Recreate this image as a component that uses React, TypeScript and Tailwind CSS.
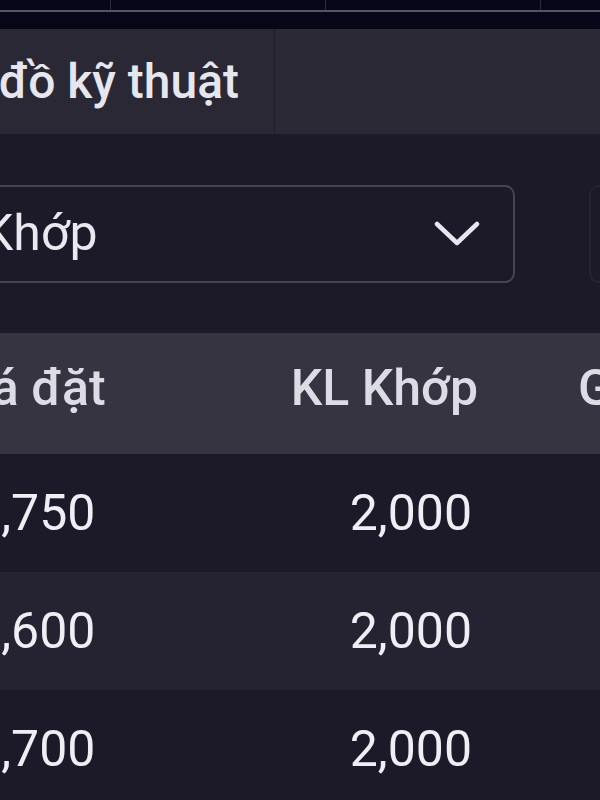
import React from "react";

const rows = [
  { price: "25,750", qty: "2,000", alt: false },
  { price: "25,600", qty: "2,000", alt: true },
  { price: "25,700", qty: "2,000", alt: false },
];

export default function App() {
  return (
    <div className="w-[600px] h-[800px] overflow-hidden bg-[#1c1a28] font-['Roboto',sans-serif] text-[#eeeef4]">
      {/* chart axis strip */}
      <div className="h-[29px] bg-[#08071a] flex flex-col">
        <div className="h-[10px] flex">
          <div className="ml-[110px] w-[1px] h-full bg-[#2e2d3c]" />
          <div className="ml-[214px] w-[1px] h-full bg-[#2e2d3c]" />
          <div className="ml-[214px] w-[1px] h-full bg-[#2e2d3c]" />
        </div>
        <div className="h-[2px] bg-[#555464]" />
      </div>

      {/* tabs */}
      <div className="h-[105px] flex bg-[#2a2835]">
        <div className="w-[275px] shrink-0 flex items-center justify-end pr-[35px] border-r border-[#201e2c] text-[48px] font-medium whitespace-nowrap text-[#e6e6ee]">
          Biểu đồ kỹ thuật
        </div>
        <div className="flex-1 bg-[#2b2936]" />
      </div>

      {/* select */}
      <div className="h-[199px] flex items-center">
        <div className="-ml-[200px] w-[715px] shrink-0 h-[98px] border-2 border-[#464453] rounded-[10px] flex items-center justify-between pl-[180px] pr-[32px]">
          <span className="text-[50px] text-[#e8e8ef] whitespace-nowrap">Khớp</span>
          <svg width="48" height="26" viewBox="0 0 48 26" fill="none">
            <path d="M4 3 L24 22 L44 3" stroke="#e6e6ee" strokeWidth="4.5" strokeLinecap="round" strokeLinejoin="round" />
          </svg>
        </div>
        <div className="ml-[74px] w-[100px] shrink-0 h-[98px] border-2 border-[#262433] rounded-[10px]" />
      </div>

      {/* table header */}
      <div className="h-[121px] bg-[#363440] flex items-center pb-[10px] text-[50px] font-medium text-[#dcdce4] whitespace-nowrap">
        <div className="-ml-[60px] flex items-center">
          <div className="w-[300px] shrink-0 pl-[5px]">Giá đặt</div>
          <div className="w-[240px] shrink-0 text-right pr-[2px]">KL Khớp</div>
          <div className="shrink-0 pl-[98px]">Giá khớp</div>
        </div>
      </div>

      {/* rows */}
      {rows.map((r, i) => (
        <div
          key={i}
          className={`h-[118px] flex items-center text-[50px] whitespace-nowrap ${r.alt ? "bg-[#252331]" : "bg-[#1c1a28]"}`}
        >
          <div className="-ml-[60px] flex items-center">
            <div className="w-[300px] shrink-0 pl-[5px]">{r.price}</div>
            <div className="w-[240px] shrink-0 text-right pr-[8px]">{r.qty}</div>
            <div className="shrink-0 pl-[98px]" />
          </div>
        </div>
      ))}
    </div>
  );
}
